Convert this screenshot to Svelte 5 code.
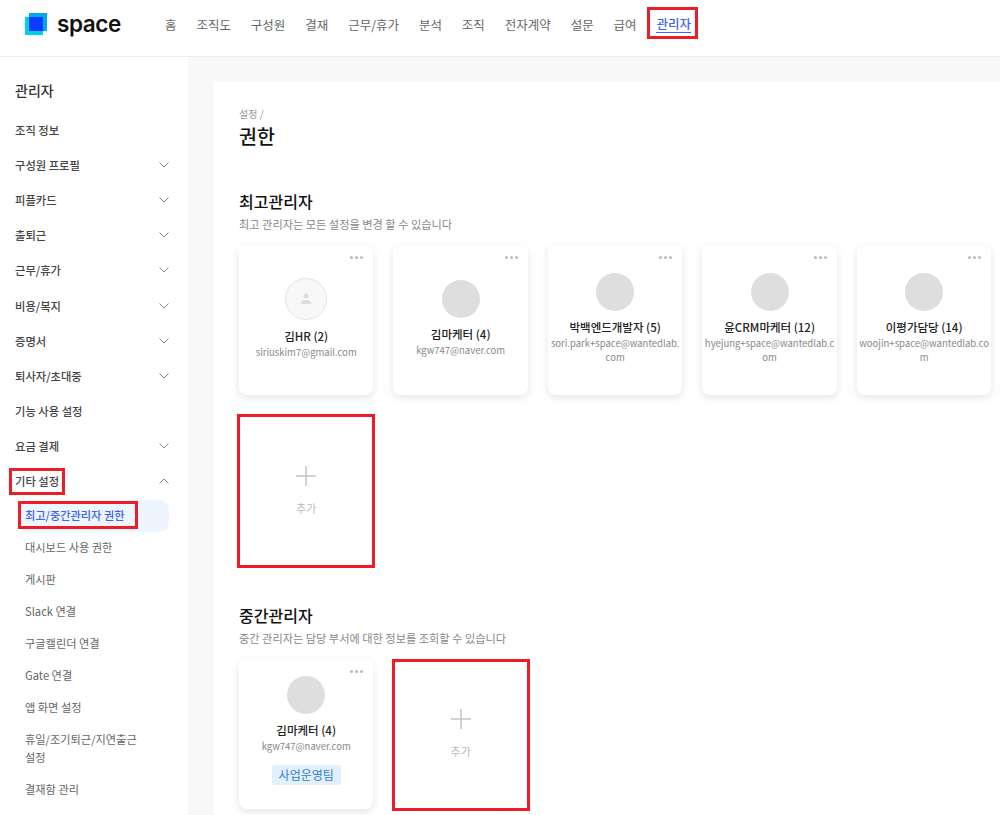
<script>
  const nav = ['홈','조직도','구성원','결재','근무/휴가','분석','조직','전자계약','설문','급여'];
  const menu = [
    ['조직 정보',false],['구성원 프로필',true],['피플카드',true],['출퇴근',true],['근무/휴가',true],['비용/복지',true],
    ['증명서',true],['퇴사자/초대중',true],['기능 사용 설정',false],['요금 결제',true]
  ];
  const sub = ['대시보드 사용 권한','게시판','Slack 연결','구글캘린더 연결','Gate 연결','앱 화면 설정','휴일/조기퇴근/지연출근 설정','결재함 관리'];
  const admins = [
    {name:'김HR (2)',mail:'siriuskim7@gmail.com',empty:true},
    {name:'김마케터 (4)',mail:'kgw747@naver.com'},
    {name:'박백엔드개발자 (5)',mail:'sori.park+space@wantedlab.com'},
    {name:'윤CRM마케터 (12)',mail:'hyejung+space@wantedlab.com'},
    {name:'이평가담당 (14)',mail:'woojin+space@wantedlab.com'}
  ];
</script>

<div class="page">
  <header class="top">
    <div class="logo">
      <svg width="22" height="22" viewBox="0 0 22 22"><rect x="4" y="0" width="18" height="18" fill="#00a8f0"/><rect x="0" y="4" width="18" height="18" fill="#00d2e6"/><rect x="4" y="4" width="14" height="14" fill="#0a3cff"/></svg>
      <span class="word">space</span>
    </div>
    <nav class="nav">
      {#each nav as n}<span>{n}</span>{/each}
      <span class="cur mark">관리자</span>
    </nav>
  </header>
  <div class="body">
    <aside class="side">
      <h2>관리자</h2>
      {#each menu as [t, arrow]}
        <div class="mi"><span>{t}</span>{#if arrow}<svg width="10" height="6" viewBox="0 0 10 6"><path d="M.5.5 5 5 9.500.5" fill="none" stroke="#888" stroke-width="1"/></svg>{/if}</div>
      {/each}
      <div class="mi"><span class="mark">기타 설정</span><svg width="10" height="6" viewBox="0 0 10 6"><path d="M.5 5.500 5 1l4.500 4.500" fill="none" stroke="#888" stroke-width="1"/></svg></div>
      <div class="si on"><span class="mark">최고/중간관리자 권한</span></div>
      {#each sub as s}<div class="si">{s}</div>{/each}
    </aside>
    <main class="main">
      <section class="panel">
        <div class="crumb">설정 /</div>
        <h1>권한</h1>
        <h3>최고관리자</h3>
        <p class="desc">최고 관리자는 모든 설정을 변경 할 수 있습니다</p>
        <div class="grid">
          {#each admins as a}
            <div class="card">
              <i class="dots"></i>
              {#if a.empty}
                <div class="av blank"><svg width="12" height="12" viewBox="0 0 12 12" fill="#dcdcdc"><circle cx="6" cy="3" r="2.500"/><path d="M1 11c0-3 2-4 5-4s5 1 5 4z"/></svg></div>
              {:else}
                <div class="av"></div>
              {/if}
              <div class="name">{a.name}</div>
              <div class="mail">{a.mail}</div>
            </div>
          {/each}
          <div class="add mark"><svg width="20" height="20" viewBox="0 0 20 20"><path d="M10 0v20M0 10h20" stroke="#c4c4c4" stroke-width="1.500"/></svg><span>추가</span></div>
        </div>
        <h3 class="second">중간관리자</h3>
        <p class="desc">중간 관리자는 담당 부서에 대한 정보를 조회할 수 있습니다</p>
        <div class="grid">
          <div class="card">
            <i class="dots"></i>
            <div class="av"></div>
            <div class="name">김마케터 (4)</div>
            <div class="mail">kgw747@naver.com</div>
            <span class="tag">사업운영팀</span>
          </div>
          <div class="add mark two"><svg width="20" height="20" viewBox="0 0 20 20"><path d="M10 0v20M0 10h20" stroke="#c4c4c4" stroke-width="1.500"/></svg><span>추가</span></div>
        </div>
      </section>
    </main>
  </div>
</div>

<style>
  :global(body) { margin: 0; background: #fff; }
  .page { height: 815px; overflow: hidden; font-family: "Noto Sans CJK KR", "Noto Sans", sans-serif; color: #333; }
  .top { height: 48px; padding: 0 0 8px 25px; border-bottom: 1px solid #ececec; display: flex; align-items: center; }
  .logo { width: 140px; display: flex; align-items: center; gap: 10px; }
  .word { font-family: Inter, "Noto Sans", sans-serif; font-weight: 600; font-size: 22.500px; letter-spacing: -.4px; color: #111; line-height: 22px; }
  .nav { display: flex; gap: 19.900px; font-size: 12.500px; color: #666; align-items: center; }
  .cur { color: #3b64f0; font-weight: 500; border-bottom: 1px solid #3b64f0; line-height: 17px; }
  .mark { position: relative; }
  .mark::after { content: ""; position: absolute; pointer-events: none; inset: -2px; border: 3px solid #ee1c25; }
  .cur.mark::after { inset: -8px -7px -7px -9px; }
  .body { display: flex; height: 758px; }
  .side { width: 188px; flex: none; box-sizing: border-box; padding: 23px 18px 0 15px; background: #fff; }
  .side h2 { margin: 0 0 11px; font-size: 14px; font-weight: 500; color: #333; line-height: 21px; }
  .mi { height: 35.200px; display: flex; align-items: center; justify-content: space-between; font-size: 11.300px; font-weight: 500; color: #444; padding-right: 1px; }
  .mi .mark::after { inset: -5px -6px -6px -6px; }
  .si { margin: 0 1px 0 3px; padding: 6px 20px 6px 7px; font-size: 11.200px; line-height: 18px; color: #666; min-height: 20px; }
  .si:last-child { margin-top: 2px; }
  .si.on { margin-top: 1px; background: #eff5ff; color: #3b64f0; font-weight: 500; border-radius: 9px; }
  .si.on .mark::after { inset: -6px -13px -6px -7px; }
  .main { flex: 1; min-width: 0; background: #f8f8f8; padding: 25px 0 0 26px; }
  .panel { background: #fff; height: 800px; padding: 24px 0 0 25px; box-sizing: border-box; }
  .crumb { font-size: 10px; color: #999; line-height: 15px; }
  h1 { margin: 2px 0 0; font-size: 19.500px; font-weight: 500; color: #111; line-height: 26px; }
  h3 { margin: 40px 0 0; font-size: 16px; font-weight: 500; color: #111; line-height: 24px; }
  h3.second { margin-top: 37px; }
  .desc { margin: 4px 0 13px; font-size: 11.200px; color: #888; line-height: 15px; }
  .grid { display: flex; flex-wrap: wrap; gap: 21px 20.100px; width: 775px; }
  .card { position: relative; width: 134.400px; height: 150px; box-sizing: border-box; border-radius: 8px; background: #fff; box-shadow: 0 3px 8px rgba(0,0,0,.1); display: flex; flex-direction: column; align-items: center; justify-content: center; padding: 0 2px 4px; text-align: center; }
  .dots { position: absolute; top: 11px; right: 10px; width: 3px; height: 3px; border-radius: 50%; background: #bbb; box-shadow: -5px 0 #bbb, -10px 0 #bbb; }
  .av { width: 38px; height: 38px; border-radius: 50%; background: #dedede; flex: none; }
  .av.blank { width: 40px; height: 40px; background: #f8f8f8; border: 1px solid #e4e4e4; display: flex; align-items: center; justify-content: center; }
  .name { margin-top: 8px; font-size: 11.500px; font-weight: 500; color: #222; line-height: 16px; }
  .mail { font-size: 9.500px; color: #888; line-height: 14px; margin-top: 1px; word-break: break-all; width: 100%; }
  .tag { margin: 12px 0 4px; background: #e2f0fc; color: #2b7fd4; font-size: 12px; border-radius: 3px; padding: 0 7px; line-height: 20px; }
  .add { width: 134.400px; height: 150px; box-sizing: border-box; display: flex; flex-direction: column; align-items: center; justify-content: center; gap: 14px; font-size: 11px; color: #bbb; }
  .add.two { border-bottom: 1px dashed #e3dcea; }
  .add.mark.two::after { inset: 0 -2px -3px -1.500px; }
</style>
